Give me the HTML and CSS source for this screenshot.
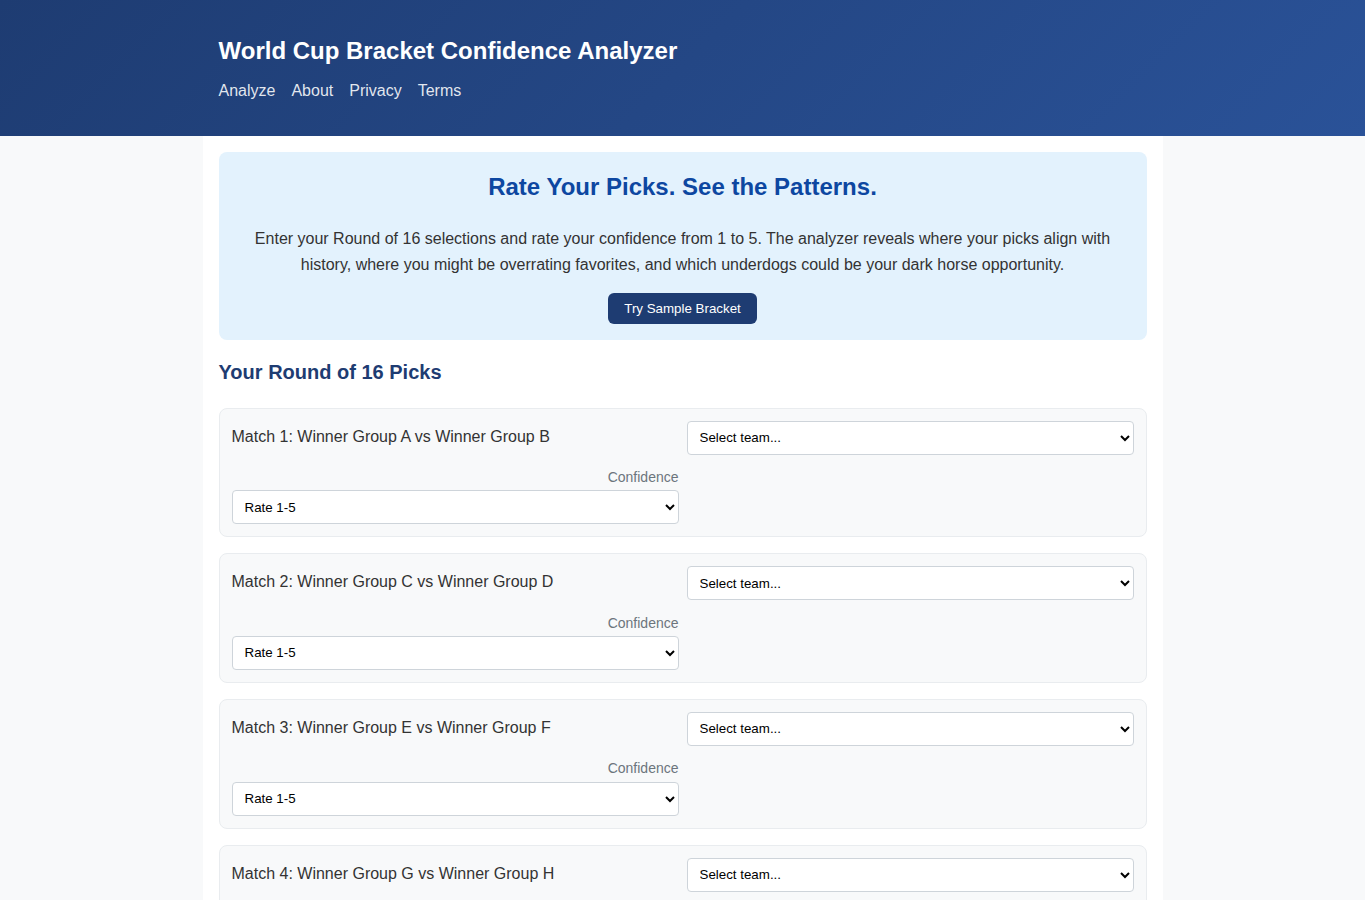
FILE: index.html
```html
<!DOCTYPE html>
<html lang="en">
<head>
	<meta charset="UTF-8">
	<title>World Cup Bracket Confidence Analyzer</title>
	<link rel="stylesheet" href="styles.css">
</head>
<body>

	<header class="site-header">
		<div class="wrap">
			<h1>World Cup Bracket Confidence Analyzer</h1>
			<nav class="site-nav">
				<a href="#">Analyze</a>
				<a href="#">About</a>
				<a href="#">Privacy</a>
				<a href="#">Terms</a>
			</nav>
		</div>
	</header>

	<main class="container">
		<section class="hero">
			<h2>Rate Your Picks. See the Patterns.</h2>
			<p>Enter your Round of 16 selections and rate your confidence from 1 to 5. The analyzer reveals where your picks align with history, where you might be overrating favorites, and which underdogs could be your dark horse opportunity.</p>
			<button class="btn" type="button">Try Sample Bracket</button>
		</section>

		<h2 class="section-title">Your Round of 16 Picks</h2>

		<form class="picks">
			<div class="match">
				<div class="match-name">Match 1: Winner Group A vs Winner Group B</div>
				<select class="field"><option>Select team...</option><option>Winner Group A</option><option>Winner Group B</option></select>
				<div class="conf">
					<label>Confidence</label>
					<select class="field"><option>Rate 1-5</option><option>1</option><option>2</option><option>3</option><option>4</option><option>5</option></select>
				</div>
			</div>
			<div class="match">
				<div class="match-name">Match 2: Winner Group C vs Winner Group D</div>
				<select class="field"><option>Select team...</option><option>Winner Group C</option><option>Winner Group D</option></select>
				<div class="conf">
					<label>Confidence</label>
					<select class="field"><option>Rate 1-5</option><option>1</option><option>2</option><option>3</option><option>4</option><option>5</option></select>
				</div>
			</div>
			<div class="match">
				<div class="match-name">Match 3: Winner Group E vs Winner Group F</div>
				<select class="field"><option>Select team...</option><option>Winner Group E</option><option>Winner Group F</option></select>
				<div class="conf">
					<label>Confidence</label>
					<select class="field"><option>Rate 1-5</option><option>1</option><option>2</option><option>3</option><option>4</option><option>5</option></select>
				</div>
			</div>
			<div class="match">
				<div class="match-name">Match 4: Winner Group G vs Winner Group H</div>
				<select class="field"><option>Select team...</option><option>Winner Group G</option><option>Winner Group H</option></select>
				<div class="conf">
					<label>Confidence</label>
					<select class="field"><option>Rate 1-5</option><option>1</option><option>2</option><option>3</option><option>4</option><option>5</option></select>
				</div>
			</div>
			<div class="match">
				<div class="match-name">Match 5: Runner-up Group A vs Runner-up Group B</div>
				<select class="field"><option>Select team...</option></select>
				<div class="conf">
					<label>Confidence</label>
					<select class="field"><option>Rate 1-5</option><option>1</option><option>2</option><option>3</option><option>4</option><option>5</option></select>
				</div>
			</div>
			<div class="match">
				<div class="match-name">Match 6: Runner-up Group C vs Runner-up Group D</div>
				<select class="field"><option>Select team...</option></select>
				<div class="conf">
					<label>Confidence</label>
					<select class="field"><option>Rate 1-5</option><option>1</option><option>2</option><option>3</option><option>4</option><option>5</option></select>
				</div>
			</div>
			<div class="match">
				<div class="match-name">Match 7: Runner-up Group E vs Runner-up Group F</div>
				<select class="field"><option>Select team...</option></select>
				<div class="conf">
					<label>Confidence</label>
					<select class="field"><option>Rate 1-5</option><option>1</option><option>2</option><option>3</option><option>4</option><option>5</option></select>
				</div>
			</div>
			<div class="match">
				<div class="match-name">Match 8: Runner-up Group G vs Runner-up Group H</div>
				<select class="field"><option>Select team...</option></select>
				<div class="conf">
					<label>Confidence</label>
					<select class="field"><option>Rate 1-5</option><option>1</option><option>2</option><option>3</option><option>4</option><option>5</option></select>
				</div>
			</div>
			<button class="btn" type="button">Analyze My Bracket</button>
		</form>
	</main>

</body>
</html>
```

FILE: styles.css
```css
body{
	margin: 0;
	font-family: "Liberation Sans", Arial, sans-serif;
	line-height: 1.6;
	color: #333;
	background: #f8f9fa;
}
a{
	text-decoration: none;
}

/* header */
.site-header{
	background: linear-gradient(135deg, #1e3c72, #2a5298);
	color: #fff;
	padding: 32px 0;
}
.wrap{
	max-width: 960px;
	margin: 0 auto;
	padding: 0 16px;
	box-sizing: border-box;
}
.site-header h1{
	margin: 0 0 8px;
	font-size: 24px;
}
.site-nav{
	display: flex;
	gap: 16px;
}
.site-nav a{
	color: rgba(255, 255, 255, 0.88);
}

/* main */
.container{
	max-width: 960px;
	margin: 0 auto;
	padding: 16px;
	box-sizing: border-box;
	background: #fff;
}
.hero{
	background: #e3f2fd;
	border-radius: 8px;
	padding: 16px 24px;
	text-align: center;
}
.hero h2{
	margin: 0 0 20px;
	font-size: 24px;
	color: #0d47a1;
}
.hero p{
	margin: 0 0 15px;
}
.btn{
	font-family: "Liberation Sans", Arial, sans-serif;
	font-size: 13.33px;
	background: #1e3c72;
	color: #fff;
	border: 0;
	border-radius: 6px;
	padding: 8px 16px;
	cursor: pointer;
}
.section-title{
	margin: 16px 0 20px;
	font-size: 20px;
	color: #1e3c72;
}

/* match cards */
.match{
	display: grid;
	grid-template-columns: 1fr 1fr;
	gap: 11.3px 8px;
	background: #f8f9fa;
	border: 1px solid #e9ecef;
	border-radius: 8px;
	padding: 12px;
	margin-bottom: 16px;
}
.match-name{
	padding-top: 3px;
}
.conf label{
	display: block;
	text-align: right;
	font-size: 14px;
	color: #6c757d;
	margin-bottom: 2px;
}
.field{
	display: block;
	width: 100%;
	height: 34px;
	box-sizing: border-box;
	font-family: "Liberation Sans", Arial, sans-serif;
	font-size: 13.33px;
	color: #000;
	background: #fff;
	border: 1px solid #ced4da;
	border-radius: 4px;
	padding: 0 8px;
}
```
